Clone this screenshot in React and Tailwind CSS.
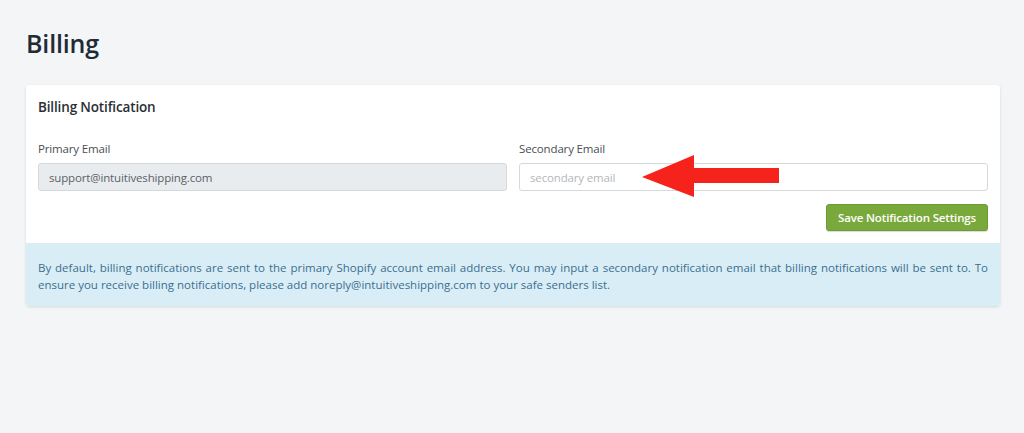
import React, { useState } from "react";

function Arrow() {
  return (
    <svg
      className="absolute left-[123px] top-[-8px] pointer-events-none"
      width="140"
      height="46"
      viewBox="0 0 140 46"
    >
      <polygon points="0,22 52,0 52,13 137,13 137,28 52,28 52,42" fill="#f5231c" />
    </svg>
  );
}

export default function App() {
  const [secondary, setSecondary] = useState("");

  return (
    <div
      className="min-h-screen bg-[#f4f5f7] pl-[26px] pr-[24px] pt-[26px] tracking-[-0.15px]"
      style={{ fontFamily: '"Open Sans", "Noto Sans", sans-serif' }}
    >
      <h1 className="text-[25px] leading-[34px] font-semibold text-[#212b36] mb-[25px]">
        Billing
      </h1>

      <div className="bg-white rounded-[3px] shadow-[0_1px_3px_rgba(0,0,0,0.12)] overflow-hidden">
        <div className="px-3 pt-[13px] pb-[12px]">
          <h2 className="text-[13.5px] leading-[18px] font-semibold text-[#2a2f35] mb-[25px]">
            Billing Notification
          </h2>

          <div className="grid grid-cols-2 gap-3">
            {/* Primary */}
            <div>
              <label className="block text-[11.5px] leading-[16px] text-[#4a4f55] mb-[6px]">
                Primary Email
              </label>
              <input
                type="text"
                value="support@intuitiveshipping.com"
                disabled
                className="w-full h-[28px] px-[10px] text-[11.5px] text-[#5c6167] bg-[#e9ecef] border border-[#d6d9dc] rounded-[3px]"
              />
            </div>

            {/* Secondary */}
            <div>
              <label className="block text-[11.5px] leading-[16px] text-[#4a4f55] mb-[6px]">
                Secondary Email
              </label>
              <div className="relative">
                <input
                  type="text"
                  placeholder="secondary email"
                  value={secondary}
                  onChange={(e) => setSecondary(e.target.value)}
                  className="w-full h-[28px] px-[10px] text-[11.5px] text-[#333] placeholder:text-[#b4b8bc] bg-white border border-[#d6d9dc] rounded-[3px] focus:outline-none"
                />
                <Arrow />
              </div>
              <div className="flex justify-end mt-[13px]">
                <button className="h-[27px] px-[11px] text-[11.5px] font-semibold text-white bg-[#7aa93b] border border-[#6e9b33] rounded-[3px] shadow-[0_1px_1px_rgba(0,0,0,0.15)]">
                  Save Notification Settings
                </button>
              </div>
            </div>
          </div>
        </div>

        <div className="bg-[#d9edf7] px-3 pt-[16px] pb-[13px]">
          <p className="text-[11.5px] leading-[17px] tracking-normal text-[#3a6f8e] text-justify">
            By default, billing notifications are sent to the primary Shopify account email
            address. You may input a secondary notification email that billing notifications
            will be sent to. To ensure you receive billing notifications, please add
            noreply@intuitiveshipping.com to your safe senders list.
          </p>
        </div>
      </div>
    </div>
  );
}
